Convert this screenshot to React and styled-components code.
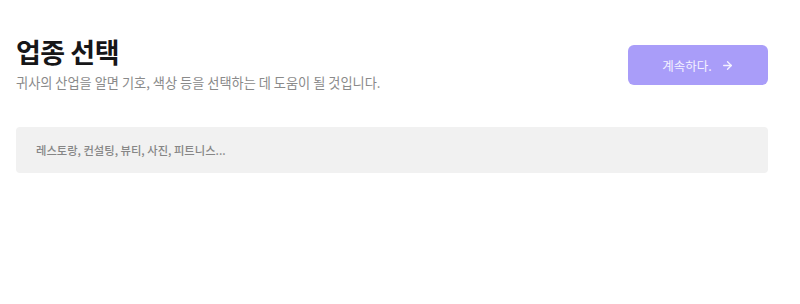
import React from "react";
import styled, { createGlobalStyle } from "styled-components";

const GlobalStyle = createGlobalStyle`
  body {
    margin: 0;
    background: #fff;
    font-family: "Noto Sans CJK KR", "Noto Sans", sans-serif;
  }
`;

export default function App() {
  return (
    <>
      <GlobalStyle />
      <Page>
        <Header>
          <TitleBlock>
            <Title>업종 선택</Title>
            <Subtitle>귀사의 산업을 알면 기호, 색상 등을 선택하는 데 도움이 될 것입니다.</Subtitle>
          </TitleBlock>
          <NextButton>
            계속하다.
            <svg width="13" height="13" viewBox="0 0 24 24" fill="none" stroke="currentColor" strokeWidth="2.5" strokeLinecap="round" strokeLinejoin="round">
              <path d="M5 12h14" />
              <path d="M12 5l7 7-7 7" />
            </svg>
          </NextButton>
        </Header>
        <SearchInput placeholder="레스토랑, 컨설팅, 뷰티, 사진, 피트니스..." />
      </Page>
    </>
  );
}

const Page = styled.div`
  width: 800px;
  height: 304px;
  box-sizing: border-box;
  padding: 35px 32px 0 16px;
  display: flex;
  flex-direction: column;
  gap: 35px;
`;

const Header = styled.div`
  display: flex;
  justify-content: space-between;
  align-items: flex-start;
`;

const TitleBlock = styled.div`
  display: flex;
  flex-direction: column;
  gap: 5px;
`;

const Title = styled.h1`
  margin: 0;
  font-size: 27px;
  font-weight: 700;
  line-height: 34px;
  color: #161618;
  letter-spacing: -0.5px;
`;

const Subtitle = styled.p`
  margin: 0;
  font-size: 13.2px;
  line-height: 18px;
  color: #8a8a8a;
`;

const NextButton = styled.button`
  margin-top: 10px;
  width: 140px;
  height: 40px;
  border: none;
  border-radius: 6px;
  background: #a99df9;
  color: #f4f2ff;
  font-family: inherit;
  font-size: 12.5px;
  font-weight: 400;
  display: flex;
  align-items: center;
  justify-content: center;
  gap: 9px;
  cursor: pointer;
`;

const SearchInput = styled.input`
  width: 100%;
  height: 46px;
  box-sizing: border-box;
  border: none;
  border-radius: 4px;
  background: #f1f1f1;
  padding: 0 20px;
  font-family: inherit;
  font-size: 11.3px;
  font-weight: 500;
  color: #333;
  outline: none;
  &::placeholder {
    color: #868686;
  }
`;
